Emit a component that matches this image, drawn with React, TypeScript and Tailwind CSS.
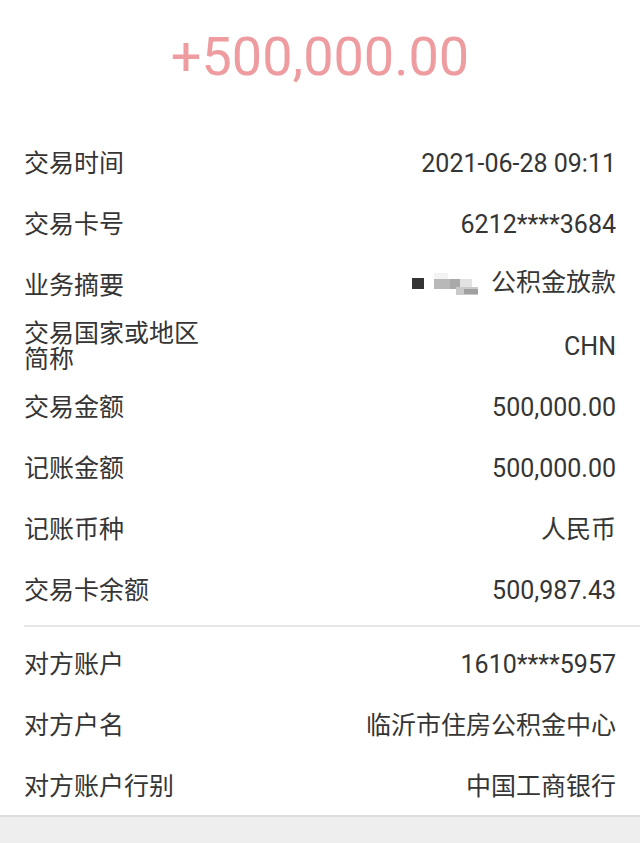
import React from "react";

const rows1: { label: string; value: React.ReactNode }[] = [
  { label: "交易时间", value: "2021-06-28 09:11" },
  { label: "交易卡号", value: "6212****3684" },
  {
    label: "业务摘要",
    value: (
      <span className="inline-flex items-center">
        <svg width="70" height="26" viewBox="0 0 70 26" className="mr-[9px]">
          <rect x="0" y="8" width="12" height="11" fill="#343434" />
          <rect x="22" y="3" width="14" height="6" fill="#f3f3f3" />
          <rect x="22" y="9" width="16" height="10" fill="#b8b8b8" />
          <rect x="38" y="9" width="10" height="10" fill="#a9a9a9" />
          <rect x="48" y="9" width="12" height="10" fill="#e2e2e2" />
          <rect x="44" y="17" width="22" height="8" fill="#c9c9c9" />
          <rect x="52" y="19" width="14" height="5" fill="#9f9f9f" />
        </svg>
        公积金放款
      </span>
    ),
  },
  { label: "交易国家或地区简称", value: "CHN" },
  { label: "交易金额", value: "500,000.00" },
  { label: "记账金额", value: "500,000.00" },
  { label: "记账币种", value: "人民币" },
  { label: "交易卡余额", value: "500,987.43" },
];

const rows2 = [
  { label: "对方账户", value: "1610****5957" },
  { label: "对方户名", value: "临沂市住房公积金中心" },
  { label: "对方账户行别", value: "中国工商银行" },
];

function Row({ label, value }: { label: string; value: React.ReactNode }) {
  return (
    <div className="flex h-[61px] items-center justify-between pl-6 pr-6 text-[25px] leading-[26px] text-[#353535]">
      <div className="w-[182px] shrink-0">{label}</div>
      <div className="flex-1 text-right">{value}</div>
    </div>
  );
}

export default function App() {
  return (
    <div
      className="flex min-h-screen flex-col bg-[#eeeeee]"
      style={{ fontFamily: 'Roboto, "Noto Sans CJK SC", sans-serif' }}
    >
      <div className="bg-white pb-[0px]">
        <div className="flex h-[133px] justify-center pt-[22px]">
          <div className="text-[54px] leading-[70px] text-[#ef9ca1]">+500,000.00</div>
        </div>
        <div>
          {rows1.map((r) => (
            <Row key={r.label} label={r.label} value={r.value} />
          ))}
        </div>
        <div className="ml-6 mt-[4px] h-[2px] bg-[#e6e6e6]" />
        <div className="pt-[7px] pb-[0px]">
          {rows2.map((r) => (
            <Row key={r.label} label={r.label} value={r.value} />
          ))}
        </div>
      </div>
      <div className="-mt-[2px] h-[2px] bg-[#dddddd]" />
    </div>
  );
}
